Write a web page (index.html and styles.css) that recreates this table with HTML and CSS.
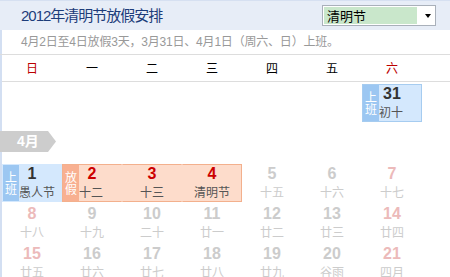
FILE: index.html
```html
<!DOCTYPE html>
<html lang="zh-CN">
<head>
    <meta charset="UTF-8">
    <meta name="viewport" content="width=device-width, initial-scale=1.0">
    <title>2012年清明节放假安排</title>
    <link rel="stylesheet" href="styles.css">
</head>
<body>
    <div class="calendar">
        <div class="cal-head">
            <h1 class="cal-title">2012年清明节放假安排</h1>
            <div class="holiday-select">
                <span class="holiday-select-value">清明节</span>
                <span class="holiday-select-arrow"></span>
            </div>
        </div>
        <p class="cal-notice">4月2日至4日放假3天，3月31日、4月1日（周六、日）上班。</p>

        <div class="week-names">
            <span class="weekend">日</span>
            <span>一</span>
            <span>二</span>
            <span>三</span>
            <span>四</span>
            <span>五</span>
            <span class="weekend">六</span>
        </div>

        <!-- 3月 -->
        <div class="week">
            <div class="day"></div>
            <div class="day"></div>
            <div class="day"></div>
            <div class="day"></div>
            <div class="day"></div>
            <div class="day"></div>
            <div class="day work boxed has-tag">
                <span class="tag">上班</span>
                <span class="num">31</span>
                <span class="lunar">初十</span>
            </div>
        </div>

        <div class="month-label"><span class="month-tab">4月</span></div>

        <!-- 4月 -->
        <div class="week">
            <div class="day work has-tag">
                <span class="tag">上班</span>
                <span class="num">1</span>
                <span class="lunar">愚人节</span>
            </div>
            <div class="day rest rest-first has-tag">
                <span class="tag">放假</span>
                <span class="num">2</span>
                <span class="lunar">十二</span>
            </div>
            <div class="day rest">
                <span class="num">3</span>
                <span class="lunar">十三</span>
            </div>
            <div class="day rest rest-last">
                <span class="num">4</span>
                <span class="lunar">清明节</span>
            </div>
            <div class="day off"><span class="num">5</span><span class="lunar">十五</span></div>
            <div class="day off"><span class="num">6</span><span class="lunar">十六</span></div>
            <div class="day off sat"><span class="num">7</span><span class="lunar">十七</span></div>
        </div>
        <div class="week">
            <div class="day off sun"><span class="num">8</span><span class="lunar">十八</span></div>
            <div class="day off"><span class="num">9</span><span class="lunar">十九</span></div>
            <div class="day off"><span class="num">10</span><span class="lunar">二十</span></div>
            <div class="day off"><span class="num">11</span><span class="lunar">廿一</span></div>
            <div class="day off"><span class="num">12</span><span class="lunar">廿二</span></div>
            <div class="day off"><span class="num">13</span><span class="lunar">廿三</span></div>
            <div class="day off sat"><span class="num">14</span><span class="lunar">廿四</span></div>
        </div>
        <div class="week">
            <div class="day off sun"><span class="num">15</span><span class="lunar">廿五</span></div>
            <div class="day off"><span class="num">16</span><span class="lunar">廿六</span></div>
            <div class="day off"><span class="num">17</span><span class="lunar">廿七</span></div>
            <div class="day off"><span class="num">18</span><span class="lunar">廿八</span></div>
            <div class="day off"><span class="num">19</span><span class="lunar">廿九</span></div>
            <div class="day off"><span class="num">20</span><span class="lunar">谷雨</span></div>
            <div class="day off sat"><span class="num">21</span><span class="lunar">四月</span></div>
        </div>
        <div class="week">
            <div class="day off sun"><span class="num">22</span><span class="lunar">初二</span></div>
            <div class="day off"><span class="num">23</span><span class="lunar">初三</span></div>
            <div class="day off"><span class="num">24</span><span class="lunar">初四</span></div>
            <div class="day off"><span class="num">25</span><span class="lunar">初五</span></div>
            <div class="day off"><span class="num">26</span><span class="lunar">初六</span></div>
            <div class="day off"><span class="num">27</span><span class="lunar">初七</span></div>
            <div class="day off sat"><span class="num">28</span><span class="lunar">初八</span></div>
        </div>
    </div>
</body>
</html>
```

FILE: styles.css
```css
* {
    margin: 0;
    padding: 0;
    box-sizing: border-box;
}
html, body {
    overflow: hidden;
}
body {
    font-family: 'Liberation Sans', 'Noto Sans CJK SC', sans-serif;
    color: #333;
    background: linear-gradient(to right, #d3dff2 2px, #fff 2px);
}

/* title bar */
.cal-head {
    height: 30px;
    display: flex;
    align-items: center;
    justify-content: space-between;
    padding: 0 14px 0 21px;
    background: #e7edf7;
    border-top: 1px solid #d6e0f1;
}
.cal-title {
    font-family: 'Liberation Sans', 'Noto Sans CJK SC', sans-serif;
    font-size: 15px;
    font-weight: normal;
    letter-spacing: -1px;
    color: #1d3c7a;
    line-height: 20px;
}
.holiday-select {
    width: 114px;
    height: 21px;
    display: flex;
    align-items: center;
    padding: 1px;
    background: #fff;
    border: 1px solid #a9b0ba;
}
.holiday-select-value {
    width: 93px;
    height: 17px;
    padding-left: 3px;
    background: #c9e7cb;
    color: #000;
    font-family: 'Noto Sans CJK SC', sans-serif;
    font-size: 13px;
    line-height: 17px;
}
.holiday-select-arrow {
    margin-left: 8px;
    width: 0;
    height: 0;
    border-left: 3.5px solid transparent;
    border-right: 3.5px solid transparent;
    border-top: 4px solid #000;
}

.cal-notice {
    height: 25px;
    padding-left: 21px;
    border-bottom: 1px solid #ddd;
    color: #999;
    font-size: 12px;
    letter-spacing: -0.2px;
    line-height: 24px;
}

/* weekday header */
.week-names {
    display: grid;
    grid-template-columns: repeat(7, 60px);
    margin-left: 2px;
    height: 27px;
    border-bottom: 1px solid #ddd;
    font-family: 'Noto Sans CJK SC', sans-serif;
    font-size: 12px;
    line-height: 26px;
    text-align: center;
    color: #000;
}
.week-names .weekend {
    color: #b00;
}

/* day grid */
.week {
    display: grid;
    grid-template-columns: repeat(7, 60px);
    margin-left: 2px;
    height: 40px;
    padding-top: 2px;
}
.day {
    position: relative;
    height: 38px;
    display: flex;
    flex-direction: column;
    align-items: center;
    border: 1px solid transparent;
}
.num {
    font-size: 16px;
    font-weight: bold;
    line-height: 18px;
}
.lunar {
    font-family: 'Noto Sans CJK SC', sans-serif;
    font-size: 12px;
    line-height: 18px;
    color: #555;
    white-space: nowrap;
}
/* the lunar line starts right after the side tag */
.has-tag .lunar {
    align-self: flex-start;
    padding-left: 16px;
}
.tag {
    position: absolute;
    left: 0;
    top: 0;
    bottom: 0;
    width: 16px;
    display: flex;
    align-items: center;
    justify-content: center;
    padding: 0 2px;
    color: #fff;
    font-family: 'Noto Sans CJK SC', sans-serif;
    font-size: 12px;
    line-height: 12px;
    text-align: center;
}

/* 调休上班 */
.work {
    background: #d4e8fd;
    border-color: #d4e8fd;
}
.work .tag {
    background: #9cc7f2;
}
.work.boxed {
    border-color: #a6ccf0;
}

/* 放假 */
.rest {
    background: #fddccb;
    border-color: #f3b08d transparent;
}
.rest .num {
    color: #c00;
}
.rest .tag {
    background: #f8b091;
}
.rest-first {
    border-left-color: #f3b08d;
}
.rest-last {
    border-right-color: #f3b08d;
}

/* 其余日期 */
.off .num {
    color: #ccc;
}
.off .lunar {
    color: #ccc;
}
.off.sun .num,
.off.sat .num {
    color: #ecbaba;
}

.month-label {
    height: 40px;
    padding-top: 9px;
}
.month-tab {
    display: block;
    width: 56px;
    height: 21px;
    padding-left: 17px;
    background: #cdcdcd;
    color: #fff;
    font-size: 14px;
    font-weight: bold;
    line-height: 21px;
    clip-path: polygon(0 0, 48px 0, 56px 50%, 48px 100%, 0 100%);
}
```
